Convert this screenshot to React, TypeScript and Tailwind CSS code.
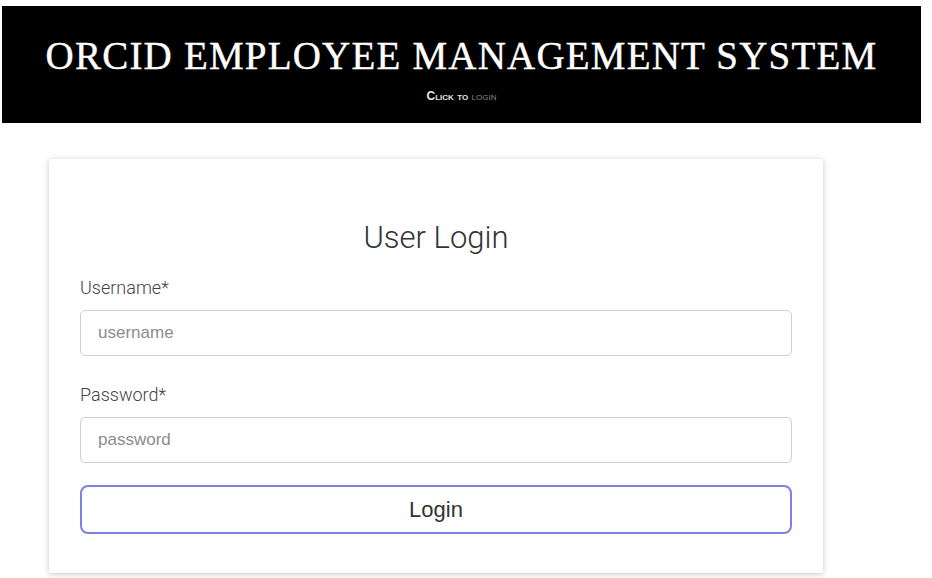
import React from 'react';

const App: React.FC = () => {
  return (
    <div className="min-h-[578px] w-[932px] bg-white">
      <header className="ml-[2px] mt-[6px] h-[117px] w-[919px] bg-black flex flex-col items-center">
        <h1
          className="mt-[26px] text-[39px] leading-[48px] tracking-[1.2px] text-white [-webkit-text-stroke:0.4px_white]"
          style={{ fontFamily: '"Liberation Serif", "DejaVu Serif", serif' }}
        >
          ORCID EMPLOYEE MANAGEMENT SYSTEM
        </h1>
        <p
          className="mt-[9px] text-[12px] leading-[14px] font-bold [font-variant:small-caps] text-[#e6e6e6]"
          style={{ fontFamily: '"Liberation Sans", Arial, sans-serif' }}
        >
          Click to <span className="font-normal text-[#8a8a8a]">login</span>
        </p>
      </header>

      <div
        className="ml-[49px] mt-[36px] w-[774px] bg-white pt-[61px] px-[31px] pb-[39px] shadow-[0_1px_6px_rgba(0,0,0,0.22)]"
        style={{ fontFamily: 'Roboto, "Liberation Sans", Arial, sans-serif' }}
      >
        <h2 className="text-center text-[31px] leading-[36px] font-light text-[#333]">User Login</h2>

        <label className="mt-[20px] block text-[18px] leading-[24px] font-light text-[#444]">Username*</label>
        <input
          type="text"
          placeholder="username"
          className="mt-[10px] block h-[46px] w-full rounded-[5px] border border-[#cfcfcf] px-[17px] text-[17px] text-[#333] placeholder:text-[#8c8c8c] outline-none"
          style={{ fontFamily: '"Liberation Sans", Arial, sans-serif' }}
        />

        <label className="mt-[27px] block text-[18px] leading-[24px] font-light text-[#444]">Password*</label>
        <input
          type="password"
          placeholder="password"
          className="mt-[10px] block h-[46px] w-full rounded-[5px] border border-[#cfcfcf] px-[17px] text-[17px] text-[#333] placeholder:text-[#8c8c8c] outline-none"
          style={{ fontFamily: '"Liberation Sans", Arial, sans-serif' }}
        />

        <button
          className="mt-[22px] block h-[49px] w-full rounded-[8px] border-2 border-[#7d80e0] bg-white text-[22px] text-[#333]"
          style={{ fontFamily: '"Liberation Sans", Arial, sans-serif' }}
        >
          Login
        </button>
      </div>
    </div>
  );
};

export default App;
